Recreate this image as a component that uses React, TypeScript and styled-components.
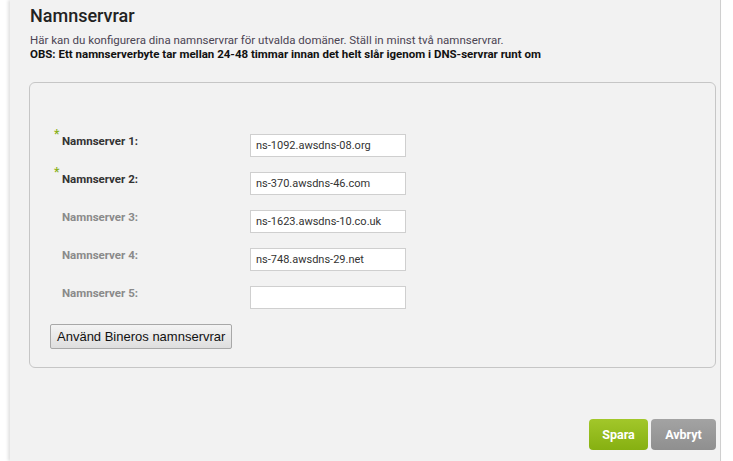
import React from "react";
import styled, { createGlobalStyle } from "styled-components";

const Global = createGlobalStyle`
  html, body { margin: 0; padding: 0; background: #ffffff; }
  body { font-family: "Roboto", "Liberation Sans", sans-serif; }
  #root { height: 461px; overflow: hidden; }
`;

const Page = styled.div`
  display: flex;
  height: 461px;
  padding-left: 10px;
  background: #ffffff;
`;

const Panel = styled.main`
  width: 711px;
  background: #f2f2f2;
  border-right: 1px solid #cfcfcf;
  box-shadow: -2px 0 3px rgba(0, 0, 0, 0.12);
  padding: 5px 5px 0 19px;
  box-sizing: border-box;
  display: flex;
  flex-direction: column;
`;

const Title = styled.h1`
  margin: 0 0 0 1px;
  font-size: 18px;
  font-weight: 500;
  color: #222;
  line-height: 22px;
`;

const Desc = styled.p<{ $strong?: boolean }>`
  margin: 0 0 0 1px;
  font-size: 11.5px;
  line-height: 14px;
  font-weight: ${(p) => (p.$strong ? 700 : 400)};
  color: ${(p) => (p.$strong ? "#111" : "#4b4452")};
`;

const Intro = styled.div`
  display: flex;
  flex-direction: column;
  margin-top: 6px;
`;

const Fieldset = styled.section`
  margin-top: 21px;
  width: 687px;
  height: 286px;
  box-sizing: border-box;
  border: 1px solid #c6c6c6;
  border-radius: 6px;
  padding: 51px 20px 0 20px;
  display: flex;
  flex-direction: column;
`;

const Row = styled.div`
  display: grid;
  grid-template-columns: 200px 156px;
  height: 38px;
  align-items: start;
`;

const Label = styled.label<{ $required?: boolean }>`
  position: relative;
  padding-left: 12px;
  font-size: 11.5px;
  font-weight: 700;
  line-height: 14px;
  color: ${(p) => (p.$required ? "#333" : "#8a8a8a")};
`;

const Star = styled.span`
  position: absolute;
  left: 4px;
  top: -7px;
  color: #8ab01c;
  font-size: 12px;
  font-weight: 700;
`;

const Input = styled.input`
  width: 156px;
  height: 23px;
  box-sizing: border-box;
  border: 1px solid #cfcfcf;
  background: #fff;
  padding: 0 5px;
  font-family: "Roboto", "Liberation Sans", sans-serif;
  font-size: 11px;
  color: #333;
  margin: 0;
  outline: none;
`;

const DefaultButton = styled.button`
  align-self: flex-start;
  height: 25px;
  padding: 0 6px;
  font-family: "Liberation Sans", Arial, sans-serif;
  font-size: 13px;
  color: #111;
  border: 1px solid #a8a8a8;
  border-radius: 2px;
  background: linear-gradient(#f4f4f4, #dedede);
`;

const Actions = styled.div`
  margin-top: 51px;
  width: 687px;
  display: flex;
  justify-content: flex-end;
  gap: 3px;
`;

const ActionButton = styled.button<{ $primary?: boolean }>`
  height: 31px;
  padding: 0 12px;
  border: none;
  border-radius: 4px;
  font-family: "Roboto", "Liberation Sans", sans-serif;
  font-size: 12.5px;
  font-weight: 700;
  color: #fff;
  min-width: ${(p) => (p.$primary ? "59px" : "65px")};
  background: ${(p) =>
    p.$primary
      ? "linear-gradient(#a2c72a, #86b011)"
      : "linear-gradient(#a3a3a3, #8f8f8f)"};
`;

const servers = [
  { value: "ns-1092.awsdns-08.org", required: true },
  { value: "ns-370.awsdns-46.com", required: true },
  { value: "ns-1623.awsdns-10.co.uk", required: false },
  { value: "ns-748.awsdns-29.net", required: false },
  { value: "", required: false },
];

export default function App() {
  return (
    <>
      <Global />
      <Page>
        <Panel>
          <Title>Namnservrar</Title>
          <Intro>
            <Desc>
              Här kan du konfigurera dina namnservrar för utvalda domäner. Ställ in minst två namnservrar.
            </Desc>
            <Desc $strong>
              OBS: Ett namnserverbyte tar mellan 24-48 timmar innan det helt slår igenom i DNS-servrar runt om
            </Desc>
          </Intro>
          <Fieldset>
            {servers.map((s, i) => (
              <Row key={i}>
                <Label $required={s.required}>
                  {s.required && <Star>*</Star>}
                  Namnserver {i + 1}:
                </Label>
                <Input defaultValue={s.value} />
              </Row>
            ))}
            <DefaultButton>Använd Bineros namnservrar</DefaultButton>
          </Fieldset>
          <Actions>
            <ActionButton $primary>Spara</ActionButton>
            <ActionButton>Avbryt</ActionButton>
          </Actions>
        </Panel>
      </Page>
    </>
  );
}
